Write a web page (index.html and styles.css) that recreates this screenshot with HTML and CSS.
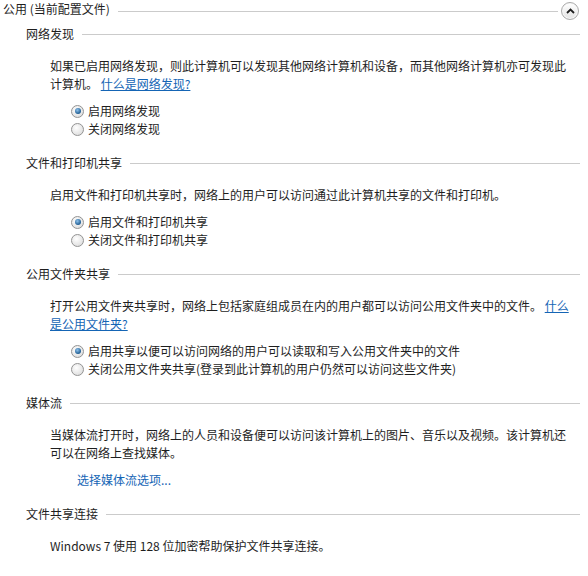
FILE: index.html
```html
<!DOCTYPE html>
<html lang="zh-CN">
<head>
    <meta charset="UTF-8">
    <meta name="viewport" content="width=device-width, initial-scale=1.0">
    <title>高级共享设置</title>
    <link rel="stylesheet" href="styles.css">
</head>
<body>
    <div class="panel">
        <div class="panel-head">
            <span class="panel-title">公用 (当前配置文件)</span>
            <span class="rule"></span>
            <button class="collapse" type="button">
                <svg width="9" height="6" viewBox="0 0 9 6"><polyline points="1,5 4.5,1.5 8,5" fill="none" stroke="#1e1e1e" stroke-width="1.8"/></svg>
            </button>
        </div>

        <section class="group">
            <div class="group-title"><span>网络发现</span><span class="rule"></span></div>
            <p class="desc">如果已启用网络发现，则此计算机可以发现其他网络计算机和设备，而其他网络计算机亦可发现此计算机。 <a class="link" href="#">什么是网络发现?</a></p>
            <div class="options">
                <label class="option"><span class="radio checked"></span>启用网络发现</label>
                <label class="option"><span class="radio"></span>关闭网络发现</label>
            </div>
        </section>

        <section class="group">
            <div class="group-title"><span>文件和打印机共享</span><span class="rule"></span></div>
            <p class="desc">启用文件和打印机共享时，网络上的用户可以访问通过此计算机共享的文件和打印机。</p>
            <div class="options">
                <label class="option"><span class="radio checked"></span>启用文件和打印机共享</label>
                <label class="option"><span class="radio"></span>关闭文件和打印机共享</label>
            </div>
        </section>

        <section class="group">
            <div class="group-title"><span>公用文件夹共享</span><span class="rule"></span></div>
            <p class="desc">打开公用文件夹共享时，网络上包括家庭组成员在内的用户都可以访问公用文件夹中的文件。 <a class="link" href="#">什么是公用文件夹?</a></p>
            <div class="options">
                <label class="option"><span class="radio checked"></span>启用共享以便可以访问网络的用户可以读取和写入公用文件夹中的文件</label>
                <label class="option"><span class="radio"></span>关闭公用文件夹共享(登录到此计算机的用户仍然可以访问这些文件夹)</label>
            </div>
        </section>

        <section class="group">
            <div class="group-title"><span>媒体流</span><span class="rule"></span></div>
            <p class="desc">当媒体流打开时，网络上的人员和设备便可以访问该计算机上的图片、音乐以及视频。该计算机还可以在网络上查找媒体。</p>
            <div class="options">
                <a class="link plain" href="#">选择媒体流选项...</a>
            </div>
        </section>

        <section class="group">
            <div class="group-title"><span>文件共享连接</span><span class="rule"></span></div>
            <p class="desc">Windows 7 使用 128 位加密帮助保护文件共享连接。</p>
        </section>
    </div>
</body>
</html>
```

FILE: styles.css
```css
html, body {
    margin: 0;
    background: #ffffff;
}
body {
    font-family: "Noto Sans CJK SC", "Noto Sans", sans-serif;
    font-size: 12px;
    line-height: 18px;
    color: #1e1e1e;
    width: 588px;
    height: 576px;
    overflow: hidden;
}
.panel-head {
    display: flex;
    align-items: center;
    height: 22px;
    padding: 0 9px 0 3px;
}
.panel-title {
    position: relative;
    top: -2px;
}
.rule {
    flex: 1;
    height: 1px;
    background-color: #cbcbcb;
    margin-left: 8px;
}
.collapse {
    width: 18px;
    height: 18px;
    margin-left: 3px;
    padding: 0;
    border: 1px solid #a9a9a9;
    border-radius: 50%;
    background: linear-gradient(#ffffff, #e4e4e4);
    box-shadow: inset 0 0 0 1px #f8f8f8;
    display: flex;
    align-items: center;
    justify-content: center;
}
.group {
    margin-top: 3px;
    margin-bottom: 16px;
}
.group-title {
    display: flex;
    align-items: center;
    padding: 0 8px 0 26px;
}
.desc {
    margin: 14px 0 0 50px;
    width: 522px;
}
.options {
    margin-top: 9px;
    padding-left: 71px;
}
.option {
    display: flex;
    align-items: center;
    height: 18px;
    white-space: nowrap;
}
.radio {
    width: 11px;
    height: 11px;
    border: 1px solid #939393;
    border-radius: 50%;
    background: radial-gradient(circle at 40% 35%, #ffffff, #d6d6d6);
    margin-right: 4px;
    box-sizing: content-box;
    display: flex;
    align-items: center;
    justify-content: center;
}
.radio.checked::after {
    content: "";
    width: 6px;
    height: 6px;
    border-radius: 50%;
    background: radial-gradient(circle at 40% 35%, #8fc2ec, #1f5d92 70%);
}
.link {
    color: #1565b5;
    text-decoration: underline;
}
.link.plain {
    text-decoration: none;
    padding-left: 6px;
}
```
